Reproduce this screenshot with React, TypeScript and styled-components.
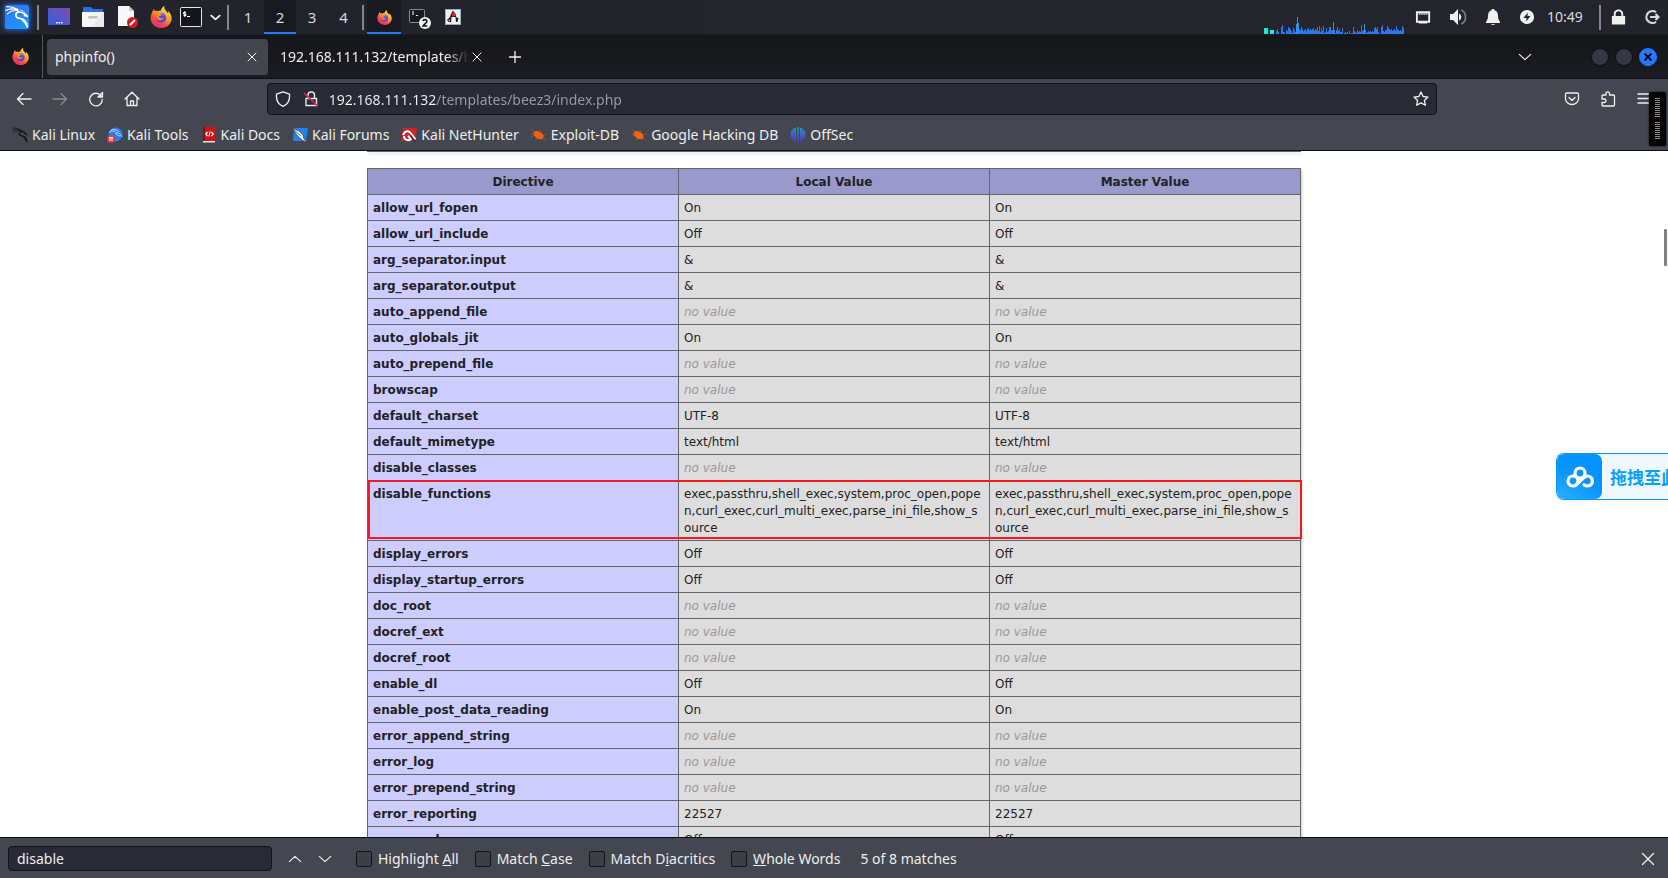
import React from 'react';
import styled, { createGlobalStyle, css } from 'styled-components';

const GlobalStyle = createGlobalStyle`
  *, *::before, *::after { box-sizing: border-box; }
  body { margin: 0; background: #fff; }
  button, input { font: inherit; color: inherit; }
  button { padding: 0; border: 0; background: none; }
`;

const uiFont = '"Noto Sans", "Open Sans", sans-serif';

const Desktop = styled.div`
  height: 100vh;
  display: flex;
  flex-direction: column;
  overflow: hidden;
  position: relative;
  font: 14px/20px ${uiFont};
  color: #eeeeec;
`;

/* ---------- desktop panel ---------- */

const Panel = styled.header`
  flex: none;
  height: 35px;
  display: flex;
  align-items: stretch;
  background: linear-gradient(90deg, #23232b, #20242b 30%, #25252e 50%, #23242c);
  border-bottom: 1px solid #1c1d22;
`;

const Slot = styled.button<{ $w: number; $active?: boolean }>`
  flex: none;
  width: ${p => p.$w}px;
  display: flex;
  align-items: center;
  justify-content: center;
  ${p => p.$active && css`
    background: #191a21;
    box-shadow: inset 0 -2px #2777ff;
  `}
`;

const Workspace = styled(Slot)`
  font-size: 15px;
  color: #d9d9dc;
`;

const PanelRule = styled.div`
  flex: none;
  width: 2px;
  height: 25px;
  margin: 5px 3px 0;
  background: #85858a;
`;

const ClockRule = styled(PanelRule)`
  margin: 5px 0 0 11px;
`;

const Spring = styled.div`
  flex: 1;
`;

const KaliTile = styled.span`
  width: 24px;
  height: 24px;
  display: flex;
  align-items: center;
  justify-content: center;
  border-radius: 2px;
  color: #fff;
  background: linear-gradient(150deg, #3a6cf5, #12a0ff);
  box-shadow: 0 0 5px 1px #2463d8;
`;

const Clock = styled.time`
  flex: none;
  width: 46px;
  line-height: 33px;
  text-align: center;
  color: #dcdcdf;
`;

/* ---------- browser tabs ---------- */

const TabStrip = styled.div`
  flex: none;
  height: 44px;
  display: flex;
  align-items: center;
  background: linear-gradient(#15161a, #1b1c21);
  border-bottom: 1px solid #101114;
`;

const PinnedTab = styled.button`
  width: 43px;
  align-self: stretch;
  display: flex;
  align-items: center;
  padding-left: 12px;
  border-right: 1px solid #55575c;
`;

const Tab = styled.div<{ $active?: boolean }>`
  width: 221px;
  height: 36px;
  margin-left: 4px;
  padding: 1px 8px 0;
  display: flex;
  align-items: center;
  border-radius: 4px;
  background: ${p => (p.$active ? '#43464e' : 'transparent')};
`;

const TabTitle = styled.span<{ $fade?: boolean }>`
  flex: 1;
  overflow: hidden;
  white-space: nowrap;
  ${p => p.$fade && css`mask-image: linear-gradient(90deg, #000 88%, transparent);`}
`;

const IconButton = styled.button<{ $w?: number; $dim?: boolean }>`
  flex: none;
  width: ${p => p.$w ?? 36}px;
  height: 32px;
  display: flex;
  align-items: center;
  justify-content: center;
  opacity: ${p => (p.$dim ? 0.4 : 1)};
`;

const TabClose = styled(IconButton)`
  width: 16px;
`;

const WindowButton = styled.button<{ $close?: boolean }>`
  width: 18px;
  height: 18px;
  margin-left: 6px;
  display: flex;
  align-items: center;
  justify-content: center;
  border-radius: 50%;
  border: 1px solid ${p => (p.$close ? '#2777ff' : '#0c0d10')};
  background: ${p => (p.$close ? '#2777ff' : '#343845')};
`;

const WindowButtons = styled.div`
  display: flex;
  padding: 0 11px 0 46px;
`;

/* ---------- navigation ---------- */

const NavBar = styled.nav`
  flex: none;
  height: 40px;
  padding: 0 6px;
  display: flex;
  align-items: center;
  background: #44474f;
`;

const UrlBar = styled.div`
  flex: 10;
  height: 32px;
  display: flex;
  align-items: center;
  border: 1px solid #111216;
  border-radius: 4px;
  background: #282a36;
`;

const UrlInput = styled.input`
  flex: 1;
  min-width: 0;
  height: 28px;
  padding: 0 0 0 4px;
  border: 0;
  outline: 0;
  background: linear-gradient(90deg, #f4f4f2 111px, #9b9ca2 111px) text;
  -webkit-text-fill-color: transparent;
`;

const Bookmarks = styled.nav`
  flex: none;
  height: 32px;
  padding: 0 12px;
  display: flex;
  align-items: center;
  gap: 12px;
  background: #44474f;
  border-bottom: 1px solid #0d0e10;
`;

const Bookmark = styled.a`
  display: flex;
  align-items: center;
  gap: 4px;
  color: inherit;
  text-decoration: none;
  white-space: nowrap;
  svg { flex: none; }
`;

/* ---------- page ---------- */

const Page = styled.main`
  flex: 1;
  min-height: 0;
  position: relative;
  overflow: hidden;
  background: #fff;
  color: #222;
  font: 12px/17px "DejaVu Sans", sans-serif;
`;

const PreviousTableEdge = styled.div`
  width: 934px;
  max-width: 100%;
  height: 1px;
  margin: 0 auto 16px;
  background: #666;
  box-shadow: 1px 2px 3px #ccc;
`;

const InfoTable = styled.table`
  width: 934px;
  max-width: 100%;
  margin: 0 auto;
  table-layout: fixed;
  border-collapse: collapse;
  box-shadow: 1px 2px 3px #ccc;

  th, td {
    padding: 5px 5px 3px;
    border: 1px solid #666;
    vertical-align: baseline;
    text-align: left;
    overflow-wrap: break-word;
  }
  thead th { background: #99c; text-align: center; }
  tbody th { background: #ccf; }
  td { background: #ddd; }
  i { color: #999; }
`;

const DirectiveName = styled.th<{ $marked: boolean }>`
  ${p => p.$marked && css`
    position: relative;
    &::after {
      content: '';
      position: absolute;
      top: -1px;
      bottom: 1px;
      left: 0;
      width: calc(300% + 4px);
      border: 2px solid #ed1c24;
    }
  `}
`;

const ScrollThumb = styled.div`
  position: absolute;
  top: 78px;
  right: 1px;
  width: 3px;
  height: 37px;
  border-radius: 1px;
  background: #7b7f80;
`;

const DropTarget = styled.button`
  position: absolute;
  top: 302px;
  right: 0;
  width: 112px;
  height: 47px;
  display: flex;
  align-items: center;
  overflow: hidden;
  white-space: nowrap;
  border: 1px solid #0a94f5;
  border-right: 0;
  border-radius: 8px 0 0 8px;
  background: #f0f8ff;
  color: #06a0ff;
  font: bold 17px/20px "Noto Sans CJK SC", sans-serif;
`;

const DropIcon = styled.span`
  flex: none;
  width: 45px;
  height: 45px;
  margin-right: 8px;
  display: flex;
  align-items: center;
  justify-content: center;
  border-radius: 7px;
  background: linear-gradient(30deg, #2eb0ff, #0593ff 50%);
`;

const LevelMeter = styled.div`
  position: absolute;
  top: 92px;
  right: 2px;
  width: 17px;
  height: 54px;
  display: flex;
  align-items: center;
  justify-content: center;
  border-radius: 2px;
  background: #050505;
  box-shadow: 0 0 2px #000;
`;

/* ---------- find bar ---------- */

const FindBar = styled.form`
  flex: none;
  height: 41px;
  padding: 1px 5px 0 8px;
  display: flex;
  align-items: center;
  background: #44474f;
  border-top: 1px solid #0d0e10;
`;

const FindInput = styled.input`
  width: 264px;
  height: 25px;
  margin-right: 8px;
  padding: 0 8px;
  border: 1px solid #111216;
  border-radius: 4px;
  outline: 0;
  background: #282a36;
`;

const Option = styled.label`
  display: flex;
  align-items: center;
  gap: 6px;
  margin-left: 16px;
  white-space: nowrap;
`;

const Check = styled.input`
  appearance: none;
  width: 16px;
  height: 16px;
  margin: 0;
  border: 1px solid #111216;
  border-radius: 2px;
  background: #3d3f44;
`;

const Status = styled.output`
  margin-left: 20px;
`;

/* ---------- drawings ---------- */

const Line = ({ d, size = 16, w = 1 }: { d: string; size?: number; w?: number }) => (
  <svg width={size} height={size} viewBox="0 0 16 16" fill="none" stroke="#f2f2f0" strokeWidth={w} strokeLinecap="round" strokeLinejoin="round">
    <path d={d} />
  </svg>
);

const closeD = 'M4 4l8 8M12 4l-8 8';
const downD = 'M1.500 5l6.500 6l6.500 -6';
const upD = 'M1.500 11l6.500 -6l6.500 6';

const Dragon = ({ size, color = 'currentColor' }: { size: number; color?: string }) => (
  <svg width={size} height={size} viewBox="0 0 24 24" fill="none" stroke={color} strokeLinecap="round" strokeLinejoin="round">
    <path strokeWidth="1.100" d="M1.500 1.800C6 1.400 9.500 2.200 12.500 4.500M.8 5.500C5 3.200 8.500 3.400 12.300 5M2.500 8.800C5.500 6 8.500 5.400 12.300 5.600" />
    <path strokeWidth="1.700" d="M12.500 4.500L13.500 7C9.800 7.600 9.800 13 14.500 13.400C19.500 13.800 21.800 17 22.300 22C20.800 18.500 19.500 16 16.500 14.200" />
    <path strokeWidth="1.700" d="M13.500 7C16.500 6.800 18.500 8 20 9.500L22.300 11.200L19.500 10.400" />
    <path strokeWidth=".8" d="M15.500 5.200C18 6 20 7.500 21 9.500" />
  </svg>
);

const Firefox = ({ size, id }: { size: number; id: string }) => (
  <svg width={size} height={size} viewBox="0 0 22 22">
    <defs>
      <linearGradient id={id} x1="0.85" y1="0.05" x2="0.25" y2="1">
        <stop offset="0" stopColor="#fff04a" />
        <stop offset="0.4" stopColor="#ffa02a" />
        <stop offset="0.7" stopColor="#ff4b38" />
        <stop offset="1" stopColor="#e8267c" />
      </linearGradient>
    </defs>
    <path fill={`url(#${id})`} d="M14.500 0c-.8 2.200.5 3.700 1.900 5.200c.8.8 1.400 1.600 1.800 2.500c.1-1.200 0-2.200-.3-3c2.600 2.200 3.800 5 3.700 8.100C21.300 18.200 16.900 22 11.300 22C5.400 22 .6 17.600.6 11.900c0-2.400.7-4.300 1.700-5.700c.2-1.300.8-2.500 1.800-3.500c0 1 .2 1.700.6 2.300c1.100-.3 2.200-.2 3.200.2C9.200 4.600 10 4.400 10.900 4.500C11.400 2.500 12.600.8 14.500 0z" />
    <circle cx="11.200" cy="12" r="5" fill="#5b45e0" />
    <path fill="#4a78ff" d="M10 7.300c3.500-1.300 6.400 1.300 6.200 4.800c-.8-1.900-2.100-2.500-4.200-2.600z" />
    <path fill="#ff8a2a" d="M3 6.500c2-1.500 5-1.100 6.600.6l2.700.6c-.3 1.400-1.300 1.900-2.700 2.300c-.9.500-.8 1.800.8 2.200c1.300.2 2.100-.6 3.300-.1c-1 1.900-3.600 2.900-5.600 1.700C6 12.600 6.300 10 6.600 8.900z" />
  </svg>
);

const DesktopIcon = () => (
  <svg width="22" height="18" viewBox="0 0 22 18">
    <defs>
      <linearGradient id="desk" x1="0" y1="1" x2="1" y2="0">
        <stop offset="0" stopColor="#2b62e0" />
        <stop offset="1" stopColor="#834bb0" />
      </linearGradient>
    </defs>
    <rect width="22" height="17" rx="1" fill="url(#desk)" />
    <path fill="#fff" d="M8 14h1.500v1.500H8zM10.500 14H12v1.500h-1.500zM13 14h1.500v1.500H13z" />
  </svg>
);

const FolderIcon = () => (
  <svg width="22" height="20" viewBox="0 0 22 20">
    <path fill="#2d6fe8" d="M1 7V1q0-1 1-1h7l2 2h9q1 0 1 1v4z" />
    <path fill="#f6f6f6" d="M0 5h22v14q0 1-1 1H1q-1 0-1-1z" />
    <path fill="#e3e3e3" d="M22 5v15H9z" opacity=".6" />
    <rect x="6" y="9" width="10" height="2.500" rx="1.200" fill="#c2c2c2" />
  </svg>
);

const NoteIcon = () => (
  <svg width="22" height="22" viewBox="0 0 22 22">
    <path fill="#f8f8f8" d="M1 0h11l5 5v15H1z" />
    <path fill="#c9c9c9" d="M12 0l5 5h-5z" />
    <circle cx="15.500" cy="16.500" r="5.500" fill="#d41a22" />
    <path stroke="#fff" strokeWidth="2" d="M13 19l5-5" />
  </svg>
);

const TerminalIcon = () => (
  <svg width="22" height="20" viewBox="0 0 22 20">
    <rect x=".5" y=".5" width="21" height="19" rx="1" fill="#15161a" stroke="#e6e6e6" />
    <path fill="none" stroke="#fff" d="M6 5.500H3.500v1.500H6v1.500H3.500M4.800 4v6M7 9.500h3" />
  </svg>
);

const SmallTerminal = () => (
  <svg width="24" height="24" viewBox="0 0 24 24">
    <rect x="1.500" y="4.500" width="15" height="13" rx="1" fill="#191a1e" stroke="#8a8a8a" />
    <path fill="none" stroke="#fff" d="M4 7h2M4 9h2M8 10.500h2" />
    <circle cx="17" cy="19" r="6" fill="#f2f2f2" transform="translate(0 -1)" />
    <path fill="none" stroke="#16161a" strokeWidth="1.600" d="M15 16.200c.3-2.200 4-2 3.800.2c0 1.500-2.600 2.700-3.700 4.600h4.200" />
  </svg>
);

const DukeIcon = () => (
  <svg width="16" height="16" viewBox="0 0 16 16">
    <rect x=".5" y=".5" width="15" height="15" fill="#eef0f0" stroke="#8fb0c2" />
    <path fill="#1c1c1e" d="M8 1.500l2.500 4l1 3l2 .5l-1 4H3.500l-1.500-2l3-3l1-3z" />
    <path fill="#f2f2f2" d="M6.500 8h4l.5 5.500H6zM3 10.500l2 .5l-.5 1.500z" />
    <circle cx="8.800" cy="5.500" r="1.900" fill="#e32222" />
  </svg>
);

const loads = [
  3, 5, 2, 0, 0, 7, 9, 2, 2, 0, 4, 3, 7, 6, 5, 3, 1, 6, 4, 2, 10, 17, 11, 5, 4, 7, 5, 3, 4, 5, 3, 5, 6, 4, 5, 4,
  5, 6, 3, 5, 4, 7, 3, 8, 2, 6, 3, 8, 1, 2, 6, 2, 3, 7, 7, 4, 4, 12, 4, 1, 4, 7, 3, 5, 2, 2, 6, 0, 1, 2, 1, 2, 0,
  3, 0, 1, 1, 7, 3, 2, 1, 4, 2, 3, 2, 9, 3, 4, 10, 4, 1, 2, 3, 2, 3, 2, 3, 2, 6, 7, 5, 7, 2, 0, 1, 7, 9, 3, 2, 4,
  4, 8, 6, 5, 4, 5, 3, 4, 5, 3, 8, 5, 4, 3, 4, 3, 8, 6,
];

const LoadGraph = () => (
  <svg width="140" height="34" viewBox="0 0 140 34" shapeRendering="crispEdges">
    <path fill="#0ff0dd" d="M0 28h4v6H0zM6 30h4v4H6z" />
    {loads.map((v, i) => (
      <rect key={i} x={12 + i} y={34 - v} width="1" height={v} fill={v > 9 ? '#2b93f5' : '#2777f2'} />
    ))}
  </svg>
);

const Bug = () => (
  <svg width="16" height="16" viewBox="0 0 16 16">
    <path fill="#ee6414" d="M3 5c2-2 5-1 8 1.500c2 2 2 4 .5 5.500c-3 1-6-.5-8-3C2.500 7.500 2.200 6 3 5z" />
    <path stroke="#b4521c" strokeWidth=".8" fill="none" d="M1 3l3 2M0 7l4 0M9 3l1 3M12 8l4-1M12 11l3 2M6 10l-1 3M3 8l-3 2" />
  </svg>
);

const ToolsIcon = () => (
  <svg width="16" height="16" viewBox="0 0 16 16">
    <circle cx="8.500" cy="7.500" r="7" fill="#2d7bf0" />
    <path fill="none" stroke="#bfe0ff" strokeWidth=".9" d="M2 5.500c3-2.500 6-1.500 7.500.5c3-.5 4.500 1.500 5.500 4M4 3c4-1 7 0 8 2M9 6c0 2 2 2.500 4 3" />
    <circle cx="4" cy="12" r="4" fill="#e03a3e" />
    <path stroke="#fff" d="M2 10.500h4M3 10.500v3.500M5 10.500v3.500" />
  </svg>
);

const DocsIcon = () => (
  <svg width="16" height="16" viewBox="0 0 16 16">
    <path fill="#cf1417" d="M2 0h12v14H2z" />
    <path fill="#8f0e12" d="M2 0h2v14H2z" />
    <path fill="#e8e8e8" d="M2 14h12v1.500H2z" />
    <path fill="none" stroke="#fff" strokeWidth="1.200" d="M6.500 5L4.800 7l1.700 2M10.500 5l1.700 2l-1.700 2M9 4.500l-1 5" />
  </svg>
);

const ForumsIcon = () => (
  <svg width="16" height="16" viewBox="0 0 16 16">
    <path fill="#1b84f0" d="M2 1h14l-2 13H1z" />
    <path fill="#f2f2f2" stroke="#26303c" strokeWidth=".6" d="M0 1l7 3l4 4l1 4l3 3.500l-5-2.500l-4-3.500z" />
    <path stroke="#444" strokeWidth=".8" d="M1 2l8 7" />
  </svg>
);

const HunterIcon = () => (
  <svg width="16" height="16" viewBox="0 0 16 16">
    <path fill="#d3202c" d="M2 1h14l-2 13H0z" />
    <path fill="none" stroke="#fff" strokeWidth="2" d="M2 8C4 3.500 8 3 10 6.500l4.500 6M3 9c0 4 4.500 5.500 7 3L7 9" />
    <path stroke="#20262e" strokeWidth="1.400" d="M9.500 8.500l4.500 6" />
  </svg>
);

const OffSecIcon = () => (
  <svg width="16" height="16" viewBox="0 0 16 16">
    <defs>
      <linearGradient id="off" x1="0" y1="0" x2="0" y2="1">
        <stop offset="0" stopColor="#18a3b8" />
        <stop offset="1" stopColor="#6026d8" />
      </linearGradient>
    </defs>
    <path fill="url(#off)" d="M6 .5v14C2.500 13.500.5 11 .5 7.500S2.500 1.500 6 .5zM10 .5c3.500 1 5.500 3.500 5.500 7s-2 6-5.500 7zM7.200 0h1.600v16H7.200z" />
    <path stroke="#44474f" strokeWidth=".4" d="M3.500 2v12M12.500 2v12" />
  </svg>
);

const CloudIcon = () => (
  <svg width="28" height="22" viewBox="0 0 28 22" fill="none" stroke="#fff" strokeWidth="3.200" strokeLinecap="round">
    <circle cx="14" cy="7" r="5" />
    <circle cx="7" cy="15" r="5" />
    <path d="M10.500 18.500l7-6.500A5 5 0 1 1 18 18.600" />
  </svg>
);

const Glyph = ({ d, w = 18 }: { d: string; w?: number }) => (
  <svg width={w} height="18" viewBox="0 0 18 18" fill="#f0f0ee" fillRule="evenodd"><path d={d} /></svg>
);

/* ---------- data ---------- */

const functions = 'exec,passthru,shell_exec,system,proc_open,popen,curl_exec,curl_multi_exec,parse_ini_file,show_source';

const directives: [string, string | null][] = [
  ['allow_url_fopen', 'On'],
  ['allow_url_include', 'Off'],
  ['arg_separator.input', '&'],
  ['arg_separator.output', '&'],
  ['auto_append_file', null],
  ['auto_globals_jit', 'On'],
  ['auto_prepend_file', null],
  ['browscap', null],
  ['default_charset', 'UTF-8'],
  ['default_mimetype', 'text/html'],
  ['disable_classes', null],
  ['disable_functions', functions],
  ['display_errors', 'Off'],
  ['display_startup_errors', 'Off'],
  ['doc_root', null],
  ['docref_ext', null],
  ['docref_root', null],
  ['enable_dl', 'Off'],
  ['enable_post_data_reading', 'On'],
  ['error_append_string', null],
  ['error_log', null],
  ['error_prepend_string', null],
  ['error_reporting', '22527'],
  ['expose_php', 'Off'],
];

const bookmarks: [string, React.ReactNode][] = [
  ['Kali Linux', <Dragon size={16} color="#101114" />],
  ['Kali Tools', <ToolsIcon />],
  ['Kali Docs', <DocsIcon />],
  ['Kali Forums', <ForumsIcon />],
  ['Kali NetHunter', <HunterIcon />],
  ['Exploit-DB', <Bug />],
  ['Google Hacking DB', <Bug />],
  ['OffSec', <OffSecIcon />],
];

const Value = ({ v }: { v: string | null }) => <td>{v ?? <i>no value</i>}</td>;

export default function App() {
  return (
    <Desktop>
      <GlobalStyle />
      <Panel>
        <Slot $w={34} aria-label="Applications"><KaliTile><Dragon size={24} /></KaliTile></Slot>
        <PanelRule />
        <Slot $w={34} aria-label="Desktop"><DesktopIcon /></Slot>
        <Slot $w={34} aria-label="Files"><FolderIcon /></Slot>
        <Slot $w={36} aria-label="Editor"><NoteIcon /></Slot>
        <Slot $w={30} aria-label="Firefox"><Firefox size={22} id="ff1" /></Slot>
        <Slot $w={30} aria-label="Terminal"><TerminalIcon /></Slot>
        <Slot $w={18} aria-label="More terminals"><Line d="M3.500 6l4.500 4l4.500 -4" size={15} w={2} /></Slot>
        <PanelRule />
        <Workspace $w={32}>1</Workspace>
        <Workspace $w={32} $active>2</Workspace>
        <Workspace $w={32}>3</Workspace>
        <Workspace $w={31}>4</Workspace>
        <PanelRule />
        <Slot $w={34} $active aria-label="Firefox window"><Firefox size={15} id="ff2" /></Slot>
        <Slot $w={38} aria-label="Terminal windows"><SmallTerminal /></Slot>
        <Slot $w={28} aria-label="Java window"><DukeIcon /></Slot>
        <Spring />
        <LoadGraph />
        <Slot $w={38} aria-label="Network">
          <Glyph w={17} d="M1 3h15v12h-3v1H4v-1H1zM3 5v8h11V5h-1v2h-1V5h-1v2h-1V5H9v2H8V5H7v2H6V5H5v2H4V5z" />
        </Slot>
        <Slot $w={32} aria-label="Volume">
          <svg width="18" height="18" viewBox="0 0 18 18">
            <path fill="#f0f0ee" d="M1 6h3l5-5v16l-5-5H1zM10 5.500c3 1 3 6 0 7z" />
            <path fill="none" stroke="#77797f" strokeWidth="1.800" d="M12 2c6 2 6 12 0 14" />
          </svg>
        </Slot>
        <Slot $w={38} aria-label="Notifications">
          <Glyph d="M9 1c1 0 1.500.5 1.500 1.300C13 3 14 5 14 8c0 3 1 4.500 2 6v1H2v-1c1-1.500 2-3 2-6c0-3 1-5 3.500-5.700C7.500 1.500 8 1 9 1zM7 16h4c-.5 1.200-3.500 1.200-4 0z" />
        </Slot>
        <Slot $w={30} aria-label="Power">
          <Glyph w={16} d="M9 1a8 8 0 1 1 0 16A8 8 0 0 1 9 1zM10 4L5 10h3.500L8 14l5-6H9.500z" />
        </Slot>
        <Clock>10:49</Clock>
        <ClockRule />
        <Slot $w={34} aria-label="Lock">
          <Glyph w={17} d="M2 8h2V6c0-6.500 10-6.500 10 0v2h2v9H2zM6 8h6V6c0-4-6-4-6 0z" />
        </Slot>
        <Slot $w={33} aria-label="Log out">
          <svg width="16" height="16" viewBox="0 0 16 16" fill="none" stroke="#d8d8d8" strokeWidth="2.200">
            <path d="M12 3.200a6 6 0 1 0 0 9.600M6 8h8M11.500 5l3 3l-3 3" />
          </svg>
        </Slot>
      </Panel>

      <TabStrip>
        <PinnedTab aria-label="Pinned tab"><Firefox size={17} id="ff3" /></PinnedTab>
        <Tab $active>
          <TabTitle>phpinfo()</TabTitle>
          <TabClose aria-label="Close tab"><Line d={closeD} /></TabClose>
        </Tab>
        <Tab>
          <TabTitle $fade>192.168.111.132/templates/be</TabTitle>
          <TabClose aria-label="Close tab"><Line d={closeD} /></TabClose>
        </Tab>
        <IconButton aria-label="New tab" $w={44}><Line d="M2.500 8h11M8 2.500v11" w={1.3} /></IconButton>
        <Spring />
        <IconButton aria-label="List tabs" $w={28}><Line d={downD} size={14} w={1.3} /></IconButton>
        <WindowButtons>
          <WindowButton aria-label="Minimize" />
          <WindowButton aria-label="Maximize" />
          <WindowButton aria-label="Close" $close>
            <svg width="8" height="8" viewBox="0 0 8 8"><path stroke="#0c1222" strokeWidth="2.200" d="M.5.5l7 7M7.500.5l-7 7" /></svg>
          </WindowButton>
        </WindowButtons>
      </TabStrip>

      <NavBar>
        <IconButton aria-label="Back"><Line d="M15 8H1.500M7 2.500L1.500 8L7 13.500" w={1.3} /></IconButton>
        <IconButton aria-label="Forward" $dim><Line d="M1 8h13.500M9 2.500L14.500 8L9 13.500" w={1.3} /></IconButton>
        <IconButton aria-label="Reload"><Line d="M13.500 5.500A6.300 6.300 0 1 0 14.300 8.500M14.500 1.500v4.500H10z" w={1.3} /></IconButton>
        <IconButton aria-label="Home"><Line d="M1 8L8 1.200L15 8M3 6.500v8h10v-8M6.500 14.500v-4.500h3v4.500" w={1.3} /></IconButton>
        <Spring />
        <UrlBar>
          <IconButton aria-label="Tracking protection" $w={30}>
            <Line d="M8 .8L14.500 3.200C15 9 12.500 13.500 8 15.300C3.500 13.500 1 9 1.500 3.200z" w={1.3} />
          </IconButton>
          <IconButton aria-label="Connection not secure" $w={27}>
            <svg width="16" height="16" viewBox="0 0 16 16" fill="none" stroke="#e6e6e6" strokeWidth="1.400">
              <path d="M3 7.500h10.500v7H3zM5 7V4c0-4 6.500-4 6.500 0v3" />
              <path stroke="#e22850" strokeWidth="1.600" d="M1 2l13.500 13" />
            </svg>
          </IconButton>
          <UrlInput aria-label="Address" defaultValue="192.168.111.132/templates/beez3/index.php" />
          <IconButton aria-label="Bookmark this page" $w={30}>
            <Line d="M8 1l2.100 4.500l4.900.6l-3.600 3.300l1 4.900L8 11.900l-4.400 2.400l1-4.900L1 6.100l4.900-.6z" w={1.3} />
          </IconButton>
        </UrlBar>
        <Spring />
        <IconButton aria-label="Save to Pocket">
          <Line d="M2.500 2h11q1 0 1 1v4.500a6.500 6 0 0 1-13 0V3q0-1 1-1zM5 6.500l3 3l3-3" w={1.3} />
        </IconButton>
        <IconButton aria-label="Extensions">
          <Line d="M2 8V5q0-1 1-1h3V2.500c0-2.200 3.500-2.200 3.500 0V4h4q1 0 1 1v9q0 1-1 1H3q-1 0-1-1v-2.500h2.500c2 0 2-3.500 0-3.500z" w={1.3} />
        </IconButton>
        <IconButton aria-label="Menu"><Line d="M2 3h12M2 7.500h12M2 12h12" w={1.3} /></IconButton>
      </NavBar>

      <Bookmarks>
        {bookmarks.map(([name, icon]) => (
          <Bookmark href="#" key={name}>{icon}{name}</Bookmark>
        ))}
      </Bookmarks>

      <Page>
        <PreviousTableEdge />
        <InfoTable>
          <thead>
            <tr><th>Directive</th><th>Local Value</th><th>Master Value</th></tr>
          </thead>
          <tbody>
            {directives.map(([name, v]) => (
              <tr key={name}>
                <DirectiveName scope="row" $marked={name === 'disable_functions'}>{name}</DirectiveName>
                <Value v={v} />
                <Value v={v} />
              </tr>
            ))}
          </tbody>
        </InfoTable>
        <ScrollThumb />
        <DropTarget><DropIcon><CloudIcon /></DropIcon>拖拽至此</DropTarget>
      </Page>

      <FindBar onSubmit={e => e.preventDefault()}>
        <FindInput aria-label="Find in page" defaultValue="disable" />
        <IconButton type="button" aria-label="Previous match" $w={30}><Line d={upD} size={14} w={1.3} /></IconButton>
        <IconButton type="button" aria-label="Next match" $w={30}><Line d={downD} size={14} w={1.3} /></IconButton>
        <Option><Check type="checkbox" /><span>Highlight <u>A</u>ll</span></Option>
        <Option><Check type="checkbox" /><span>Match <u>C</u>ase</span></Option>
        <Option><Check type="checkbox" /><span>Match D<u>i</u>acritics</span></Option>
        <Option><Check type="checkbox" /><span><u>W</u>hole Words</span></Option>
        <Status>5 of 8 matches</Status>
        <Spring />
        <IconButton type="button" aria-label="Close find bar" $w={30}><Line d="M2.500 2.500l11 11M13.500 2.500l-11 11" w={1.3} /></IconButton>
      </FindBar>

      <LevelMeter>
        <svg width="5" height="42" viewBox="0 0 5 42" shapeRendering="crispEdges">
          {Array.from({ length: 19 }, (_, i) => (
            <rect key={i} x="0" y={i * 2 + (i > 9 ? 4 : 0)} width="5" height="1" fill={i === 9 ? '#e08a1a' : '#8a8a8a'} />
          ))}
        </svg>
      </LevelMeter>
    </Desktop>
  );
}
